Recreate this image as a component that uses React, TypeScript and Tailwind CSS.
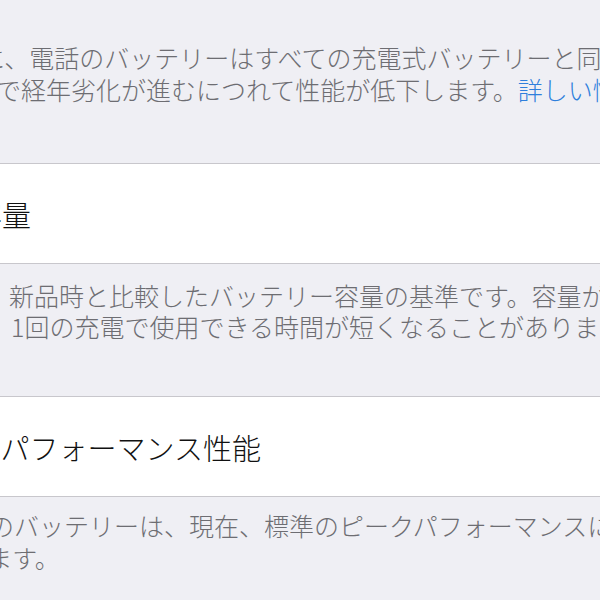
import React from "react";

const font = "font-['Noto_Sans_CJK_JP','Noto_Sans',sans-serif]";

export default function App() {
  return (
    <div className={`w-[600px] h-[600px] overflow-hidden bg-[#efeff4] ${font} font-light`}>
      {/* top footer text */}
      <div className="h-[163px] pt-[41px] text-[25px] leading-[32px] text-[#6d6d72] whitespace-nowrap">
        <div className="ml-[-20px]">に、電話のバッテリーはすべての充電式バッテリーと同様に消耗品で</div>
        <div className="ml-[-4px]">
          で経年劣化が進むにつれて性能が低下します。
          <span className="text-[#2f7fdc]">詳しい情報...</span>
        </div>
      </div>

      {/* cell 1 */}
      <div className="h-[101px] bg-white border-y border-[#c8c7cc] flex items-center whitespace-nowrap">
        <div className="ml-[-85px] text-[29px] leading-[36px] text-[#111111]">最大容量</div>
      </div>

      {/* footer 1 */}
      <div className="h-[132px] pt-[16px] pl-[9px] text-[25px] leading-[31px] text-[#6d6d72] whitespace-nowrap">
        <div>新品時と比較したバッテリー容量の基準です。容量が少ないと、</div>
        <div className="ml-[2px]">1回の充電で使用できる時間が短くなることがあります。</div>
      </div>

      {/* cell 2 */}
      <div className="h-[101px] bg-white border-y border-[#c8c7cc] flex items-center whitespace-nowrap">
        <div className="ml-[-85px] text-[29px] leading-[36px] text-[#111111]">ピークパフォーマンス性能</div>
      </div>

      {/* footer 2 */}
      <div className="pt-[12px] text-[25px] leading-[32px] text-[#6d6d72] whitespace-nowrap">
        <div className="ml-[-86px]">お使いのバッテリーは、現在、標準のピークパフォーマンスに対応</div>
        <div className="ml-[-87px]">しています。</div>
      </div>
    </div>
  );
}
